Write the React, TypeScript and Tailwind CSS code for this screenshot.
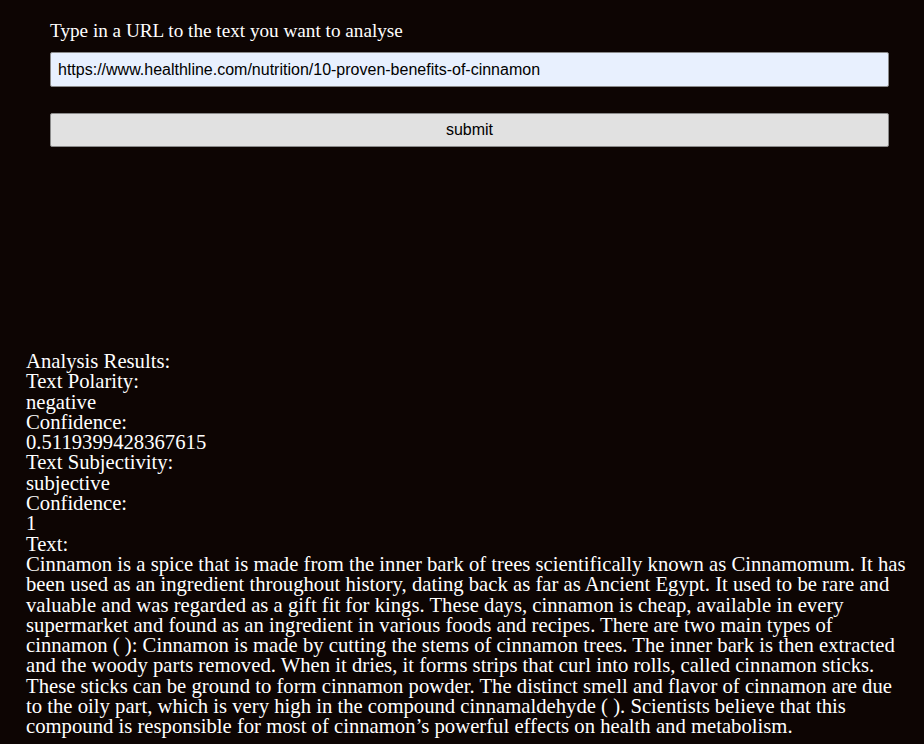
import React from "react";

const lines = [
  "Cinnamon is a spice that is made from the inner bark of trees scientifically known as Cinnamomum. It has",
  "been used as an ingredient throughout history, dating back as far as Ancient Egypt. It used to be rare and",
  "valuable and was regarded as a gift fit for kings. These days, cinnamon is cheap, available in every",
  "supermarket and found as an ingredient in various foods and recipes. There are two main types of",
  "cinnamon ( ): Cinnamon is made by cutting the stems of cinnamon trees. The inner bark is then extracted",
  "and the woody parts removed. When it dries, it forms strips that curl into rolls, called cinnamon sticks.",
  "These sticks can be ground to form cinnamon powder. The distinct smell and flavor of cinnamon are due",
  "to the oily part, which is very high in the compound cinnamaldehyde ( ). Scientists believe that this",
  "compound is responsible for most of cinnamon’s powerful effects on health and metabolism.",
];

export default function App() {
  const serif = { fontFamily: '"Liberation Serif", "Times New Roman", serif' };
  const sans = { fontFamily: '"Liberation Sans", Arial, sans-serif' };
  return (
    <div className="min-h-[744px] w-full bg-[#0d0503] text-white" style={serif}>
      <div className="pl-[50px] pr-[35px] pt-[20px]">
        <div className="text-[19.2px] leading-[22px]">Type in a URL to the text you want to analyse</div>
        <div className="mt-[10px] h-[35px] rounded-[2px] border border-[#8a8a8a] bg-[#e8f0fe] px-[7px] flex items-center text-[16px] text-black" style={sans}>
          https://www.healthline.com/nutrition/10-proven-benefits-of-cinnamon
        </div>
        <div className="mt-[26px] h-[34px] rounded-[2px] border border-[#8a8a8a] bg-[#e1e1e1] flex items-center justify-center text-[16px] text-black" style={sans}>
          submit
        </div>
      </div>
      <div className="pl-[26px] pt-[204px] text-[20.7px] leading-[20.3px] whitespace-nowrap">
        <div>Analysis Results:</div>
        <div>Text Polarity:</div>
        <div>negative</div>
        <div>Confidence:</div>
        <div>0.5119399428367615</div>
        <div>Text Subjectivity:</div>
        <div>subjective</div>
        <div>Confidence:</div>
        <div>1</div>
        <div>Text:</div>
        <div>
          {lines.map((l, i) => (
            <div key={i}>{l}</div>
          ))}
        </div>
      </div>
    </div>
  );
}
